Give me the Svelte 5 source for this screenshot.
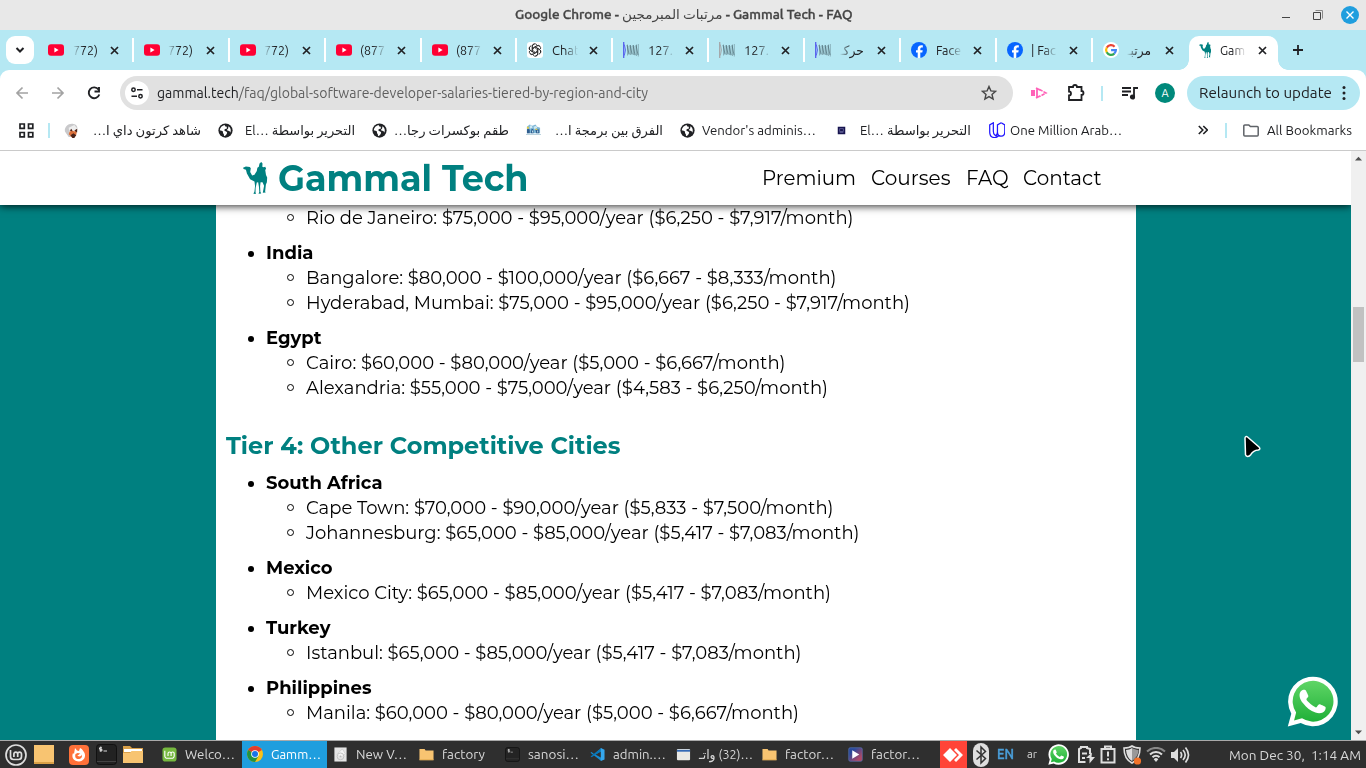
<script>
  // Scales a run of text horizontally so that it takes the given width.
  function fit(node, width) {
    const natural = node.getBoundingClientRect().width;
    if (!natural) return;
    node.style.transform = `scaleX(${width / natural})`;
    node.style.marginRight = `${width - natural}px`;
  }

  const tabs = [
    { icon: 'youtube', text: '772)', w: 25, fade: 'left' },
    { icon: 'youtube', text: '772)', w: 25, fade: 'left' },
    { icon: 'youtube', text: '772)', w: 25, fade: 'left' },
    { icon: 'youtube', text: '(877', w: 25, fade: 'right' },
    { icon: 'youtube', text: '(877', w: 25, fade: 'right' },
    { icon: 'chatgpt', text: 'Chat', w: 27, fade: 'right' },
    { icon: 'wave', text: '127.', w: 25, fade: 'right' },
    { icon: 'wavegray', text: '127.', w: 25, fade: 'right' },
    { icon: 'wave', text: 'حركـ', w: 24, fade: 'left' },
    { icon: 'facebook', text: 'Face', w: 25, fade: 'right' },
    { icon: 'facebook', text: '| Fac', w: 25, fade: 'right' },
    { icon: 'google', text: 'مرتبـ', w: 24, fade: 'left' },
    { icon: 'camel', text: 'Gam', w: 25, fade: 'right', active: true }
  ];

  const bookmarks = [
    { icon: 'anime', text: 'شاهد كرتون داي ا…', w: 108, rtl: true },
    { icon: 'globe', text: 'El… التحرير بواسطة', w: 110, end: true },
    { icon: 'globe', text: 'طقم بوكسرات رجا…', w: 115, rtl: true },
    { icon: 'blocks', text: 'الفرق بين برمجة ا…', w: 108, rtl: true },
    { icon: 'globe', text: "Vendor's adminis…", w: 114 },
    { icon: 'darkbook', text: 'El… التحرير بواسطة', w: 111, end: true },
    { icon: 'udacity', text: 'One Million Arab…', w: 112 }
  ];

  const nav = [['Premium', 94], ['Courses', 79.5], ['FAQ', 42.5], ['Contact', 78.5]];

  const tier3 = [
    { name: 'India', w: 47.5, cities: [
      ['Bangalore: $80,000 - $100,000/year ($6,667 - $8,333/month)', 530.5],
      ['Hyderabad, Mumbai: $75,000 - $95,000/year ($6,250 - $7,917/month)', 604]] },
    { name: 'Egypt', w: 55.5, cities: [
      ['Cairo: $60,000 - $80,000/year ($5,000 - $6,667/month)', 479.5],
      ['Alexandria: $55,000 - $75,000/year ($4,583 - $6,250/month)', 522]] }
  ];
  const tier4 = [
    { name: 'South Africa', w: 116.5, cities: [
      ['Cape Town: $70,000 - $90,000/year ($5,833 - $7,500/month)', 527.5],
      ['Johannesburg: $65,000 - $85,000/year ($5,417 - $7,083/month)', 553.5]] },
    { name: 'Mexico', w: 66.5, cities: [
      ['Mexico City: $65,000 - $85,000/year ($5,417 - $7,083/month)', 525]] },
    { name: 'Turkey', w: 64.5, cities: [
      ['Istanbul: $65,000 - $85,000/year ($5,417 - $7,083/month)', 495.5]] },
    { name: 'Philippines', w: 105.5, cities: [
      ['Manila: $60,000 - $80,000/year ($5,000 - $6,667/month)', 493]] }
  ];

  const windows = [
    { icon: 'mintgreen', text: 'Welco…', w: 50 },
    { icon: 'chrome', text: 'Gamm…', w: 50, active: true },
    { icon: 'disk', text: 'New V…', w: 51 },
    { icon: 'folder', text: 'factory', w: 43 },
    { icon: 'terminal', text: 'sanosi…', w: 51 },
    { icon: 'vscode', text: 'admin.…', w: 53 },
    { icon: 'window', w: 54, mixed: true },
    { icon: 'folder', text: 'factor…', w: 49 },
    { icon: 'player', text: 'factor…', w: 49 }
  ];
</script>

{#snippet icon(name, size)}
  {#if name === 'youtube'}
    <svg width={size} height={size} viewBox="0 0 16 16"><rect y="2.3" width="16" height="11.4" rx="3" fill="#ff0033" /><path d="M6.4 5.6v4.8L10.6 8z" fill="#fff" /></svg>
  {:else if name === 'chatgpt'}
    <svg width={size} height={size} viewBox="0 0 16 16"><rect width="16" height="16" rx="3" fill="#fff" />
      <g fill="none" stroke="#222" stroke-width="0.8">
        {#each [0, 60, 120, 180, 240, 300] as a}
          <path transform={`rotate(${a} 8 8)`} d="M5.4 9.3V4.6A2.6 2.6 0 0 1 9.9 2.7M6.6 7.2V5.6L9.9 3.7a2.6 2.6 0 0 1 3.3.8" />
        {/each}
      </g></svg>
  {:else if name === 'wave' || name === 'wavegray'}
    <svg width={size} height={size} viewBox="0 0 16 16">
      <path d="M4.500 2.500v11M6 4v9M7.500 3v10M9 4v9M10.500 3v10M12 4v9.500M13.500 2.500v11.500M15.300 2v12.500" stroke="#6c8b94" stroke-width="1" opacity=".6" />
      <path d="M4 3l2 9M7 3l2 9M10 3l2 10M13 3l2 10" stroke="#44626b" stroke-width=".8" opacity=".8" />
      <path d="M.7 0v16" stroke={name === 'wave' ? '#5660ee' : '#a4a6a8'} stroke-width="1.3" /><path d="M1.3 2.5l1.2 5.5-1.2 5.5" stroke={name === 'wave' ? '#5660ee' : '#a4a6a8'} fill="none" stroke-width=".9" /></svg>
  {:else if name === 'facebook'}
    <svg width={size} height={size} viewBox="0 0 16 16"><circle cx="8" cy="8" r="8" fill="#0866ff" /><path d="M6.7 15.9v-5.3H5V8.2h1.7V7.1c0-2.7 1.2-3.9 3.8-3.9l1.3.1v2.2h-.9c-1.2 0-1.6.5-1.6 1.6v1.1h2.4l-.4 2.4h-2v5.3z" fill="#fff" /></svg>
  {:else if name === 'google'}
    <svg width={size} height={size} viewBox="0 0 16 16"><circle cx="8" cy="8" r="8" fill="#fff" />
      <g fill="none" stroke-width="2.2"><path d="M11.6 4.7A4.9 4.9 0 0 0 3.8 5.6" stroke="#ea4335" /><path d="M3.8 5.5a4.9 4.9 0 0 0 0 5" stroke="#fbbc05" /><path d="M3.7 10.3a4.9 4.9 0 0 0 7.6 1.3" stroke="#34a853" /><path d="M8.1 8.1h4.8a4.7 4.7 0 0 1-1.7 3.6" stroke="#4285f4" /></g></svg>
  {:else if name === 'camel'}
    <svg width={size * 0.79} height={size} viewBox="0 0 26 33" fill="#008080"><path d="M0 6l3-1.3L7 5.2l1 1.2-.6 4 2 3.6 2.4-.8 2.4-4 .6-3.2 1.5-1L17 1.6 18.8 0l1.3 1.6-.2 3.2 1.4.6 1.6-.5.9 2-.9 1.4.8 5 1.2 2.7-.3 5-1 2.3-.8 7.2.6 1-3 .1 1.3-7-1.6-3.8-2 .2-.5 4.1.3 5.6.9 1.7-2.8.4.8-2-.4-5.2-.8-4.7-1.4.2-1.2 5.8-.1 4.2.4 1.8-2.6-.2 1.1-2.4.6-5.6-.6-4.5-4.5-2.5-3.3-5.8-1-4L.6 7.2z" /></svg>
  {:else if name === 'globe'}
    <svg width={size} height={size} viewBox="0 0 16 16"><circle cx="8" cy="8" r="7.6" fill="#202124" /><path d="M7.3 2.1C4.4 2.5 2 5 2 8c1.4.2 2.4.1 3 .8.8.9-.2 2 .9 2.6.7.5.2 1.5.6 2.4C8 14 8.4 12.5 9.2 11.6 10.3 10.4 9.6 9 8.2 8.7 7 8.5 6.3 7.6 7.2 6.6 8 6 9.2 6.4 9.5 5.5c.4-.8-.7-.9-.4-1.7C7.8 3.9 7 3.4 7.3 2.1zM11.3 3.5c-.8 1 .2 1.8-.7 2.6-.6.7-1.4.7-1 1.6.6.8 2.2.3 2.8 1.1.3.5.4 1 .9 1.2A6 6 0 0 0 11.3 3.5z" fill="#fff" /></svg>
  {:else if name === 'anime'}
    <svg width={size} height={size} viewBox="0 0 16 16"><path d="M1 9C0 4 5 0 10 1c4 0 5 4 4 8l-3 6H5z" fill="#c9c9cb" /><path d="M5 5l6-3 4 5-3 3-6 1z" fill="#eee" /><path d="M6 9l3-1 2 1 3-2-1 6-4 3-4-4z" fill="#dd713b" /><path d="M6 8l2-2 1 3zM11 8l3-2v4zM7 13l3-2 3 2-2 3H9z" fill="#4a241c" /></svg>
  {:else if name === 'blocks'}
    <svg width={size} height={size} viewBox="0 0 16 16"><path d="M1 4l3-2.5L7 3l3-1.500 2 2.500 3 1v6H1z" fill="#7db6d6" /><path d="M2 6l2 1v4H1V7zM6 6l2 1v4H5zM10 7h4v4h-3z" fill="#2f5d8e" /><path d="M4 3l2-1 1 3-3 1zM8 4l3-1 1 2-3 2zM12 8h1v2h-1zM6.500 8h1v2h-1z" fill="#cfe8f2" /><path d="M1 4h2v2H1zM10 6h2v1.500h-2z" fill="#e3cb44" /><path d="M0 12h16v.8H0z" fill="#a5c4d3" /></svg>
  {:else if name === 'darkbook'}
    <svg width={size} height={size} viewBox="0 0 16 16"><rect x="4" y="4" width="8" height="8" fill="#17144f" /><path d="M6 6h4v3H6zM6 10h4" fill="none" stroke="#6e6da4" stroke-width=".8" /></svg>
  {:else if name === 'udacity'}
    <svg width={size} height={size} viewBox="0 0 16 16" fill="none" stroke="#2015ff" stroke-width="1.2"><path d="M4.2.8L.7 2.800v7.100c0 3.200 2 5.200 4.800 5.200 1.400 0 2.800-.5 3.900-1.600C6.300 14 4.200 12.200 4.200 9zM11.800.8L8.200 2.800v6.800c0 2.300-1 3.400-2.200 4M11.800.8L15.300 2.800v6.700c0 3-1.400 4.300-3.300 4.300-2.400 0-3.800-1.500-3.800-4.200" /></svg>
  {:else if name === 'mintgreen'}
    <svg width={size} height={size} viewBox="0 0 16 16"><rect x=".5" y=".5" width="15" height="15" rx="3" fill="#76b83f" /><path d="M3 4v5.500A2.500 2.500 0 0 0 5.500 12h5A2.500 2.500 0 0 0 13 9.500V7a1.600 1.600 0 0 0-3.300 0v2.500V7A1.600 1.600 0 0 0 6.400 7v2.500" fill="none" stroke="#fff" stroke-width="1.2" /></svg>
  {:else if name === 'chrome'}
    <svg width={size} height={size} viewBox="0 0 16 16"><circle cx="8" cy="8" r="8" fill="#fbc116" /><path d="M8 8L1.1 4A8 8 0 0 1 14.9 4z" fill="#e33b2e" /><path d="M8 8L1.1 4A8 8 0 0 0 8 16l3.5-6z" fill="#229342" /><circle cx="8" cy="8" r="3.8" fill="#fff" /><circle cx="8" cy="8" r="3" fill="#1a73e8" /></svg>
  {:else if name === 'disk'}
    <svg width={size} height={size} viewBox="0 0 16 16"><rect x="1.500" y=".5" width="13" height="15" fill="#e4e4e4" /><path d="M4 8l6-6 3 5-3 3" fill="#f5f5f5" stroke="#c6c6c6" stroke-width=".7" /><circle cx="8" cy="10" r="3.600" fill="none" stroke="#c0c0c0" /><circle cx="8" cy="10" r="1" fill="#bbb" /></svg>
  {:else if name === 'folder'}
    <svg width={size} height={size} viewBox="0 0 16 16"><path d="M.5 2h5.500l1 1.700h8.500V14H.5z" fill="#f8c471" /><path d="M.5 13.200h15v.8H.5z" fill="#e1a94e" /></svg>
  {:else if name === 'terminal'}
    <svg width={size} height={size} viewBox="0 0 16 16"><rect x=".5" y=".5" width="15" height="15" rx="2.5" fill="#242424" stroke="#151515" /><path d="M1 12.5h14" stroke="#363636" /><path d="M5 2.7H3.2v1.2H5v1.2H3M4 2v4M6 5.500h2.400" stroke="#ddd" stroke-width=".6" fill="none" /></svg>
  {:else if name === 'vscode'}
    <svg width={size} height={size} viewBox="0 0 16 16"><path d="M12 1L4.6 7.7 1.7 5.4.5 6.2 12 15V11.4L5.7 8 12 4.5z" fill="#168bd2" /><path d="M.5 10l1.2.8L12 4.500V1z" fill="#0877b9" /><path d="M11.500 1l4 1.800v10.400l-4 1.800z" fill="#35a7ed" /></svg>
  {:else if name === 'window'}
    <svg width={size} height={size} viewBox="0 0 16 16"><rect x="1" y="2" width="14" height="12" rx="1" fill="#e9e9e5" /><path d="M1 3h14v2H1z" fill="#3469b5" /></svg>
  {:else if name === 'player'}
    <svg width={size} height={size} viewBox="0 0 16 16"><defs><linearGradient id="player-fill" x1="0" y1="0" x2="1" y2="1"><stop offset=".25" stop-color="#29499b" /><stop offset=".8" stop-color="#b04764" /></linearGradient></defs><rect x=".8" y=".8" width="14.4" height="14.4" rx="1.5" fill="url(#player-fill)" stroke="#5674b8" stroke-width=".7" /><path d="M4.500 3.500v9L12 8z" fill="#fff" /></svg>
  {/if}
{/snippet}

{#snippet whatsapp(size, id)}
  <svg width={size} height={size} viewBox="0 0 52 52">
    <defs><linearGradient {id} x1="0" y1="0" x2="0" y2="1"><stop offset="0" stop-color="#5fd566" /><stop offset="1" stop-color="#20b038" /></linearGradient></defs>
    <path d="M.8 51.4l3.6-13A25.3 25.3 0 1 1 14 48z" fill="#fff" />
    <path d="M7.2 45.4l2.1-8.1A20.8 20.8 0 1 1 15.3 43.2z" fill={`url(#${id})`} />
    <path d="M19.500 15.200c-.6-1.300-1.200-1.300-2.200-1.300-1.700 0-4.500 1.800-4.500 5.600 0 3.400 2.400 6.800 3.400 8.100 3.700 4.800 7.700 8.200 12.800 9.600 4.500 1.600 8.500.2 9.800-2.400.7-1.300.8-2.900.4-3.300-1-.9-5.300-2.800-6.200-2.800-1.300 0-2.300 3.300-3.500 3.300-1.600 0-9.700-6.300-9.700-8.200 0-.9 2-2.100 2-3.300 0-.8-1.700-4-2.300-5.300z" fill="#fff" />
  </svg>
{/snippet}

{#snippet countries(list)}
  <ul class="countries">
    {#each list as c}
      <li><span class="dot"></span><strong><span class="fit" use:fit={c.w}>{c.name}</span></strong>
        <ul>
          {#each c.cities as [text, w]}
            <li><span class="ring"></span><span class="fit" use:fit={w}>{text}</span></li>
          {/each}
        </ul>
      </li>
    {/each}
  </ul>
{/snippet}

<div class="screen">
  <header class="titlebar">
    <div class="title"><span class="fit" use:fit={337.5}>Google Chrome - <span class="arabic">مرتبات المبرمجين</span> - Gammal Tech - FAQ</span></div>
    <div class="winbtns">
      <svg width="88" height="30" viewBox="0 0 88 30" fill="none" stroke="#444">
        <path d="M4 17.5h8" /><path d="M37.5 10.5h7v8" stroke="#8a8a8a" /><path d="M35.5 12.5h7v7h-7z" /><circle cx="72" cy="15" r="9" fill="#1f9ede" stroke="none" /><path d="M68.5 11.5l7 7m0-7l-7 7" stroke="#fff" stroke-width="1.4" />
      </svg>
    </div>
  </header>

  <div class="tabstrip">
    <div class="search"><svg width="10" height="8" viewBox="0 0 10 8"><path d="M1.5 2l3.5 3.5L8.5 2" fill="none" stroke="#202124" stroke-width="2" /></svg></div>
    {#each tabs as t, i}
      <div class="tab" class:active={t.active} class:nosep={i > 10}>
        <span class="fav">{@render icon(t.icon, 16)}</span>
        <span class={['tabtext', t.fade]}><span class="fit" use:fit={t.w}>{t.text}</span></span>
        <svg class="x" width="9" height="9" viewBox="0 0 9 9"><path d="M1 1l7 7m0-7L1 8" stroke="#202124" stroke-width="1.7" /></svg>
      </div>
    {/each}
    <svg class="plus" width="12" height="12" viewBox="0 0 12 12"><path d="M6 1v10M1 6h10" stroke="#202124" stroke-width="1.8" /></svg>
  </div>

  <div class="chrome">
    <div class="toolbar">
      <svg class="arrows" width="104" height="34" viewBox="0 0 104 34" fill="none" stroke="#a3a3a3" stroke-width="1.7">
        <path d="M28 17H17M22.5 11.5L17 17l5.5 5.5M52 17h11M57.5 11.5L63 17l-5.5 5.5" />
        <path d="M98.5 13.5A5.4 5.4 0 1 0 99.3 18.5M99 11v4.5h-4.5" stroke="#202124" stroke-width="1.9" />
      </svg>
      <div class="omnibox">
        <span class="site"><svg width="14" height="14" viewBox="0 0 14 14" fill="none" stroke="#202124" stroke-width="1.5"><circle cx="3.5" cy="3.8" r="1.7" /><path d="M7 3.8h5.5M1.5 10.2H7" /><circle cx="10.5" cy="10.2" r="1.7" /></svg></span>
        <span class="url"><span class="fit" use:fit={491}><b>gammal.tech</b>/faq/global-software-developer-salaries-tiered-by-region-and-city</span></span>
        <svg class="star" width="16" height="16" viewBox="0 0 16 16"><path d="M8 1.5l1.9 4.4 4.7.4-3.6 3.1 1.1 4.7L8 11.600l-4.100 2.500L5 9.400 1.400 6.300l4.700-.4z" fill="none" stroke="#474747" stroke-width="1.4" /></svg>
      </div>
      <svg class="ext" width="54" height="34" viewBox="0 0 54 34"><path d="M0 14h4v6H0z" fill="#ff62b8" /><path d="M6 12.5v9M5 12l4 2M5 22l4-2" stroke="#ff62b8" stroke-width="1.8" fill="none" /><path d="M8.500 13.500l6.500 3.500-6.500 3.500" fill="none" stroke="#ff62b8" stroke-width="1.6" stroke-dasharray="3.5 1" /><path d="M38 11h4a2 2 0 0 1 4 0h4.500v4a2 2 0 0 1 0 4v5H38v-4.500a2 2 0 0 0 0-4z" fill="none" stroke="#202124" stroke-width="1.8" /></svg>
      <span class="sep"></span>
      <svg class="media" width="16" height="14" viewBox="0 0 16 14" fill="none" stroke="#202124" stroke-width="1.8"><path d="M0 2h9M0 5.500h9M0 9h6M12 11V2h4" /><circle cx="10.500" cy="11" r="1.700" fill="#202124" /></svg>
      <span class="avatar">A</span>
      <div class="relaunch"><span class="fit" use:fit={133}>Relaunch to update</span><svg width="4" height="16" viewBox="0 0 4 16" fill="#202124"><circle cx="2" cy="2.5" r="1.5" /><circle cx="2" cy="8" r="1.5" /><circle cx="2" cy="13.5" r="1.5" /></svg></div>
    </div>
    <div class="bookmarks">
      <svg class="apps" width="15" height="15" viewBox="0 0 15 15" fill="none" stroke="#202124" stroke-width="1.7"><path d="M1 1h4.300v4.300H1zM9.500 1h4.300v4.300H9.500zM1 9.500h4.300v4.300H1zM9.500 9.500h4.300v4.300H9.500z" /></svg>
      <span class="sep"></span>
      <div class="marks">
        {#each bookmarks as b}
          <div class="mark">{@render icon(b.icon, 15 + (b.icon === 'udacity' ? 1.5 : 0))}<span class="marktext" class:end={b.rtl || b.end} class:tight={b.icon === 'udacity'}><span class="fit" dir={b.rtl ? 'rtl' : 'ltr'} use:fit={b.w}>{b.text}</span></span></div>
        {/each}
      </div>
      <svg class="more" width="10" height="10" viewBox="0 0 10 10"><path d="M.8 1l4 4-4 4M5.300 1l4 4-4 4" fill="none" stroke="#202124" stroke-width="1.6" /></svg>
      <span class="sep"></span>
      <svg class="allicon" width="16" height="13" viewBox="0 0 16 13"><path d="M.8 2A1 1 0 0 1 1.800 1h4l1.600 1.600h6.800a1 1 0 0 1 1 1V11a1 1 0 0 1-1 1H1.800a1 1 0 0 1-1-1z" fill="none" stroke="#5f6368" stroke-width="1.5" /></svg>
      <span class="fit" use:fit={85}>All Bookmarks</span>
    </div>
  </div>

  <div class="viewport">
    <div class="page">
      <div class="sitehead">
        <div class="brand">{@render icon('camel', 32)}<span class="name"><span class="fit" use:fit={250.5}>Gammal Tech</span></span></div>
        <nav>{#each nav as [label, w]}<span class="fit" use:fit={w}>{label}</span>{/each}</nav>
      </div>
      <main>
        <ul class="countries first"><li><ul><li><span class="ring"></span><span class="fit" use:fit={547.5}>Rio de Janeiro: $75,000 - $95,000/year ($6,250 - $7,917/month)</span></li></ul></li></ul>
        {@render countries(tier3)}
        <h2><span class="fit" use:fit={394.5}>Tier 4: Other Competitive Cities</span></h2>
        {@render countries(tier4)}
      </main>
      <div class="chat">{@render whatsapp(51, 'wa-page')}</div>
      <svg class="cursor" width="20" height="24" viewBox="0 0 20 24"><path d="M2 3.3C2 1.5 3.3 1 4.5 2L16 12c1.6 1.5.8 2.7-.8 3-3.5.2-5.5 1.3-7.5 4.7-1.6 2.2-4.7 2.3-5.2 0z" fill="#000" stroke="#fff" stroke-width="1.5" /></svg>
    </div>
    <div class="scroll">
      <svg width="9" height="5" viewBox="0 0 9 5"><path d="M1 4.500h7L4.500.8z" fill="#505050" /></svg>
      <span class="thumb"></span>
      <svg width="9" height="5" viewBox="0 0 9 5"><path d="M1 .5h7L4.500 4.200z" fill="#505050" /></svg>
    </div>
  </div>

  <footer class="taskbar">
    <div class="launchers">
      <svg width="22" height="22" viewBox="0 0 22 22" fill="none" stroke="#dedede"><circle cx="11" cy="11" r="10" stroke-width="1.7" /><path d="M5.500 6v6.500c0 2 1.200 3 3 3h5c2 0 3-1.200 3-3V10a1.900 1.900 0 0 0-3.800 0v3-3a1.900 1.900 0 0 0-3.800 0v3" stroke-width="1.7" /></svg>
      <svg width="20" height="19" viewBox="0 0 20 19"><path d="M0 0h20v18H0z" fill="#f8c471" /><path d="M0 17h20v2H0z" fill="#d9a047" /></svg>
      <svg width="20" height="20" viewBox="0 0 20 20"><rect width="20" height="20" rx="4" fill="#ff7139" /><path d="M6 3l2 2.500 2 .5 1-3c3 1.500 3 3 4 4 3 5-1 9.500-5 9.500-5 0-8-4-6-8.500l1 1z" fill="#fff" /><path d="M6.500 9l2-1 3 .5c-1 .3-1.500 1-2 1.500h-1c0 2 4 2 4.500-.5.4 3.500-1.500 4.500-3.500 4.500-2.500 0-4-2-3-5z" fill="#ff7139" /></svg>
      <svg width="21" height="21" viewBox="0 0 21 21"><rect x=".5" y=".5" width="20" height="20" rx="3" fill="#222" stroke="#111" /><path d="M1 17.500h19" stroke="#444" /><path d="M6 3.800H3.500v1.500H6v1.500H3.500M4.800 2.500v5.300M7.500 7h3.500" stroke="#eee" stroke-width=".9" fill="none" /></svg>
      <svg width="20" height="19" viewBox="0 0 20 19"><path d="M0 1h7l2 2h11v15H0z" fill="#d8a04a" /><path d="M1 4h18v3H1z" fill="#fff" /><path d="M0 8h7l1.500-2H20v12H0z" fill="#f8c471" /></svg>
    </div>
    <div class="windows">
      {#each windows as w}
        <div class="win" class:active={w.active}>
          <span class="wicon">{@render icon(w.icon, w.active ? 16 : 15)}</span>
          {#if w.mixed}<span class="fit" use:fit={w.w}><bdi>واتـ</bdi> (32)…</span>{:else}<span class="fit" use:fit={w.w}>{w.text}</span>{/if}
        </div>
      {/each}
    </div>
    <div class="tray">
      <span class="anydesk"><svg width="21" height="14" viewBox="0 0 21 14"><path d="M7 0l7 7-7 7-7-7zM13 0l7 7-7 7-2-2 5-5-5-5z" fill="#fff" /></svg></span>
      <svg class="bt" width="16" height="24" viewBox="0 0 16 24"><rect width="16" height="24" rx="8" fill="#dedede" /><path d="M3.500 7.500l9 8L8 20V4l4.500 4.500-9 8" fill="none" stroke="#333" stroke-width="1.5" /></svg>
      <span class="lang en"><span class="fit" use:fit={17}>EN</span></span>
      <span class="lang ar"><span class="fit" use:fit={10}>ar</span></span>
      <span class="wa">{@render whatsapp(21, 'wa-tray')}</span>
      <svg class="bat" width="18" height="19" viewBox="0 0 18 19" fill="none" stroke="#dedede" stroke-width="2"><path d="M8.500 17H2V4l2-1V2h6v1l3 1v5" /><path d="M5 8.500h5M5 13h3" stroke-width="1.8" /><path d="M15 7.500l-6 5.500h3.500v5.500L18 12h-3.500z" fill="#dedede" stroke="none" /></svg>
      <svg class="clip" width="16" height="19" viewBox="0 0 16 19" fill="none" stroke="#dedede" stroke-width="2"><path d="M1.500 4h13v13.500h-13z" /><path d="M5 3V1.500h6V3M8 6.500v5M8 13.200v2" /></svg>
      <svg class="shield" width="19" height="20" viewBox="0 0 19 20"><path d="M9 1c2 1.500 5 2 8 2 0 7-2 12-8 15C3 15 1 10 1 3c3 0 6-.5 8-2z" fill="none" stroke="#dedede" stroke-width="1.6" /><path d="M9 3v13c-3.500-2-5.500-5.500-6-11C5 5 7.500 4 9 3z" fill="#dedede" /><path d="M9 3c2 1.200 4 1.700 6.500 2-.2 4-1.500 7.500-6.500 11z" fill="#999" /><circle cx="14.500" cy="16" r="3.600" fill="#f37329" /></svg>
      <svg class="wifi" width="20" height="15" viewBox="0 0 20 15" fill="none" stroke="#dedede" stroke-width="2"><path d="M4 7.500a8.500 8.500 0 0 1 12 0M6.500 10.300a5 5 0 0 1 7 0" /><path d="M1 4.500a13 13 0 0 1 18 0" stroke="#888" /><path d="M10 15l-2.300-2.700a3.200 3.200 0 0 1 4.600 0z" fill="#dedede" stroke="none" /></svg>
      <svg class="vol" width="20" height="18" viewBox="0 0 20 18" fill="none" stroke="#dedede" stroke-width="1.7"><path d="M1 6h3l4-4v14l-4-4H1z" fill="#dedede" stroke="none" /><path d="M10.500 6c1.500 2 1.500 4 0 6M13 4c2.800 3.200 2.800 6.800 0 10M15.500 1.500c4 5 4 10 0 15" /></svg>
      <span class="clock"><span class="fit" use:fit={132}>Mon Dec 30,&nbsp; 1:14 AM</span></span>
    </div>
  </footer>
</div>

<style>
  :global(body) { margin: 0; overflow: hidden; }
  .screen { width: 1366px; height: 768px; display: flex; flex-direction: column; overflow: hidden; background: #fff; font-family: Ubuntu, "Noto Sans", "DejaVu Sans", sans-serif; font-size: 13px; color: #202124; }
  .screen :global(svg) { display: block; flex: none; }
  .fit { display: inline-block; white-space: nowrap; transform-origin: 0 50%; flex: none; }

  .titlebar { height: 30px; flex: none; display: grid; grid-template-columns: 515px 1fr 88px; background: #e8e8e8; color: #444; }
  .title { grid-column: 2; font-weight: 500; font-size: 13.3px; line-height: 29px; height: 30px; -webkit-text-stroke: .35px #444; }
  .arabic { font-weight: 400; -webkit-text-stroke: 0; }
  .winbtns { grid-column: 3; }

  .tabstrip { height: 40px; flex: none; display: flex; background: #b5e8f3; align-items: center; }
  .search { width: 28px; height: 28px; margin: 0 4px 0 6px; border-radius: 9px; background: #fff; display: flex; align-items: center; justify-content: center; flex: none; }
  .tab { width: 95.9px; height: 24px; flex: none; box-sizing: border-box; padding-left: 10px; display: flex; align-items: center; border-right: 2px solid #fff; }
  .tab.nosep { border-right-color: transparent; }
  .fav { width: 16px; display: flex; justify-content: center; }
  .tabtext { width: 27px; margin-left: 8.5px; height: 20px; line-height: 20px; overflow: hidden; }
  .tabtext.right { -webkit-mask-image: linear-gradient(to right, #000 45%, transparent 98%); mask-image: linear-gradient(to right, #000 45%, transparent 98%); }
  .tabtext.left { -webkit-mask-image: linear-gradient(to left, #000 60%, transparent); mask-image: linear-gradient(to left, #000 60%, transparent); }
  .x { margin-left: 10.3px; }
  .tab.active { width: 89px; height: 34px; margin: 6px 0 0 .2px; padding: 0 0 6px 8px; background: #fff; border: 0; border-radius: 10px 10px 0 0; position: relative; }
  .tab.active .tabtext { margin-left: 7.5px; }
  .tab.active::before, .tab.active::after { content: ''; position: absolute; bottom: 0; width: 10px; height: 10px; }
  .tab.active::before { left: -10px; background: radial-gradient(circle at 0 0, transparent 9.5px, #fff 10px); }
  .tab.active::after { right: -10px; background: radial-gradient(circle at 100% 0, transparent 9.5px, #fff 10px); }
  .plus { margin-left: 14px; }

  .chrome { height: 80px; flex: none; border-bottom: 1px solid #cacaca; background: linear-gradient(#b5e8f3 10px, #fff 10px); }
  .toolbar { height: 40px; padding-top: 6px; box-sizing: border-box; background: #fff; border-radius: 9px 9px 0 0; display: flex; align-items: center; }
  .omnibox { width: 893px; height: 34px; margin-left: 16px; flex: none; display: flex; align-items: center; box-sizing: border-box; padding-left: 5px; background: #e1e1e1; border-radius: 17px; }
  .site { width: 24px; height: 24px; border-radius: 50%; background: #fff; display: flex; align-items: center; justify-content: center; }
  .url { margin-left: 8px; width: 491px; font-size: 15px; line-height: 34px; height: 34px; color: #5f5f5f; }
  .url b { font-weight: 400; color: #202124; }
  .star { margin-left: 333px; }
  .ext { margin-left: 18px; }
  .sep { width: 2px; height: 15px; background: #b5e8f3; flex: none; }
  .toolbar .sep { margin-left: 16px; }
  .media { margin-left: 18.5px; }
  .avatar { width: 20px; height: 20px; margin-left: 17.5px; border-radius: 50%; background: #00897b; color: #fff; font-size: 11px; line-height: 20px; text-align: center; flex: none; }
  .relaunch { width: 173px; height: 34px; margin-left: 12px; box-sizing: border-box; padding-left: 12px; background: #b5e8f3; border-radius: 17px; display: flex; font-size: 14.5px; line-height: 33px; gap: 10px; flex: none; }
  .relaunch svg { margin-top: 9px; }
  .bookmarks { height: 40px; display: flex; align-items: center; }
  .apps { margin-left: 18.5px; }
  .apps + .sep { margin-left: 14px; }
  .marks { width: 1080px; display: flex; margin-left: 14.5px; flex: none; }
  .mark { width: 154.1px; height: 20px; display: flex; align-items: center; flex: none; }
  .marktext { width: 116px; margin-left: 7px; display: flex; }
  .marktext.end { width: 115px; justify-content: flex-end; }
  .marktext.tight { margin-left: 5px; }
  .more { margin-left: 54px; }
  .more + .sep { margin-left: 16.5px; }
  .allicon { margin: 0 8px 0 16px; }

  .viewport { height: 589px; flex: none; display: flex; }
  .page { width: 1351px; background: #008080; position: relative; overflow: hidden; font-family: Montserrat, Inter, sans-serif; color: #000; }
  .sitehead { height: 54px; display: flex; align-items: center; box-sizing: border-box; padding-left: 243px; background: #fff; box-shadow: 0 1px 8px rgba(0, 0, 0, .85); position: relative; z-index: 2; }
  .brand { display: flex; align-items: center; width: 519px; color: #008080; }
  .name { margin-left: 10px; font-weight: 700; font-size: 36px; line-height: 53px; }
  nav { display: flex; gap: 15px; font-size: 20px; line-height: 55px; height: 54px; font-weight: 400; }
  main { width: 920px; height: 535px; margin-left: 216px; padding-top: 1px; background: #fff; box-sizing: border-box; font-size: 18px; font-weight: 400; line-height: 25px; overflow: hidden; }
  ul { list-style: none; margin: 0; padding: 0; }
  .countries > li { padding-left: 50px; margin-top: 10px; }
  .countries.first > li { margin-top: 0; }
  .countries li li { padding-left: 40px; height: 25px; }
  .countries strong { font-weight: 700; display: inline-block; height: 25px; vertical-align: top; }
  .dot, .ring { display: inline-block; box-sizing: border-box; width: 6px; height: 6px; border-radius: 50%; margin-left: -18px; margin-right: 12px; vertical-align: 3.5px; }
  .dot { background: #000; vertical-align: top; margin-top: 10px; }
  .ring { width: 7px; height: 7px; margin-left: -19px; margin-right: 12px; border: 1px solid #000; }
  h2 { margin: 28px 0 -2px 9.5px; font-size: 24px; line-height: 34px; font-weight: 700; color: #008080; }
  .chat { position: absolute; left: 1286.500px; top: 524.500px; }
  .cursor { position: absolute; left: 1243px; top: 284px; }
  .scroll { width: 15px; background: #f0f0f0; display: flex; flex-direction: column; align-items: center; justify-content: space-between; box-sizing: border-box; padding: 5px 0; }
  .thumb { width: 11px; height: 55px; background: #c1c1c1; margin-bottom: 222px; }

  .taskbar { height: 28px; flex: none; box-sizing: border-box; border-top: 1px solid #aaa; background: #2f2f2f; color: #d8d8d8; display: flex; }
  .launchers { width: 156px; display: flex; align-items: center; padding-left: 5px; gap: 7px; box-sizing: border-box; flex: none; }
  .launchers svg:nth-child(3) { margin-left: 8px; }
  .launchers svg:nth-child(5) { margin-left: -1px; }
  .windows { width: 784px; display: flex; flex: none; }
  .win { width: 85.7px; height: 27px; line-height: 26px; flex: none; display: flex; }
  .win.active { background: #1f9ede; color: #fff; }
  .wicon { width: 17px; height: 26px; margin: 0 7px 0 5px; display: flex; align-items: center; justify-content: center; flex: none; }
  .tray { display: flex; align-items: center; flex: none; }
  .anydesk { width: 27px; height: 27px; display: flex; align-items: center; justify-content: center; background: #ff4438; }
  .bt { margin-left: 6px; }
  .lang { font-weight: 500; font-size: 15.5px; line-height: 25px; height: 27px; }
  .en { margin-left: 8px; color: #4a9fdb; -webkit-text-stroke: .5px #4a9fdb; }
  .ar { margin-left: 13px; font-size: 11.5px; font-weight: 400; }
  .wa { margin-left: 11px; }
  .bat { margin-left: 8px; }
  .clip { margin-left: 5px; }
  .shield { margin-left: 7px; }
  .wifi { margin-left: 4px; }
  .vol { margin-left: 4px; }
  .clock { margin-left: 39px; }
</style>
